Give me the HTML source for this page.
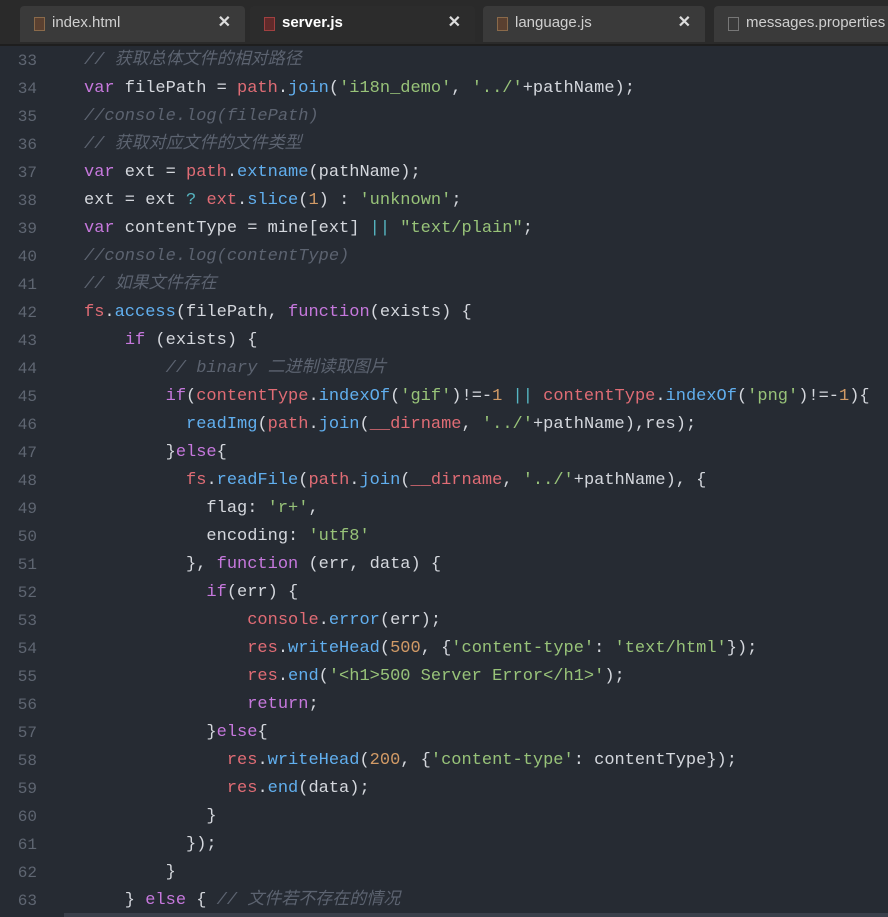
<!DOCTYPE html>
<html><head><meta charset="utf-8"><style>
body{margin:0;width:888px;height:917px;overflow:hidden;background:#262b33;font-family:"Liberation Sans",sans-serif}
.tabs{position:absolute;left:0;top:0;width:888px;height:44px;background:#2a2a2a;border-bottom:2px solid #1e1e1e}
.tab{position:absolute;top:6px;height:36px;background:#3a3a3a;color:#cfcfcf;font-size:15px;line-height:34px;border-radius:4px 4px 0 0}
.tab.act{background:#2c2c2c;color:#fff;font-weight:bold}
.tab .ic{position:absolute;left:14px;top:11px;width:9px;height:12px;border:1px solid #8a6a4a;background:#5a4030}
.tab .t{position:absolute;left:32px}
.tab .x{position:absolute;right:14px;color:#ddd;font-size:16px;font-weight:bold}
.code{position:absolute;left:0;top:47px;font-family:"Liberation Mono","Noto Sans CJK SC",monospace;font-size:17px;color:#d4d7dd}
.l{height:28px;line-height:28px;white-space:pre;position:relative}
.n{position:absolute;left:0;width:37px;text-align:right;color:#5f6672;font-size:16px}
.c{position:absolute;left:84px}
.k{color:#c678dd}.r{color:#e06c75}.b{color:#61afef}.s{color:#98c379}.o{color:#d19a66}.y{color:#56b6c2}
.m{color:#5c6370;font-style:italic}
.bot{position:absolute;left:64px;top:913px;width:824px;height:4px;background:#3a3f4a}
</style></head><body>
<div class="tabs">
<div class="tab" style="left:20px;width:225px"><span class="ic"></span><span class="t">index.html</span><span class="x">✕</span></div>
<div class="tab act" style="left:250px;width:225px"><span class="ic" style="border-color:#a04040;background:#602a2a"></span><span class="t">server.js</span><span class="x">✕</span></div>
<div class="tab" style="left:483px;width:222px"><span class="ic"></span><span class="t">language.js</span><span class="x">✕</span></div>
<div class="tab" style="left:714px;width:190px"><span class="ic" style="border-color:#777;background:#3a3a3a"></span><span class="t">messages.properties</span></div>
</div>
<div class="code">
<div class="l"><span class="n">33</span><span class="c"><span class="m">// 获取总体文件的相对路径</span></span></div>
<div class="l"><span class="n">34</span><span class="c"><span class="k">var</span> filePath = <span class="r">path</span>.<span class="b">join</span>(<span class="s">'i18n_demo'</span>, <span class="s">'../'</span>+pathName);</span></div>
<div class="l"><span class="n">35</span><span class="c"><span class="m">//console.log(filePath)</span></span></div>
<div class="l"><span class="n">36</span><span class="c"><span class="m">// 获取对应文件的文件类型</span></span></div>
<div class="l"><span class="n">37</span><span class="c"><span class="k">var</span> ext = <span class="r">path</span>.<span class="b">extname</span>(pathName);</span></div>
<div class="l"><span class="n">38</span><span class="c">ext = ext <span class="y">?</span> <span class="r">ext</span>.<span class="b">slice</span>(<span class="o">1</span>) : <span class="s">'unknown'</span>;</span></div>
<div class="l"><span class="n">39</span><span class="c"><span class="k">var</span> contentType = mine[ext] <span class="y">||</span> <span class="s">"text/plain"</span>;</span></div>
<div class="l"><span class="n">40</span><span class="c"><span class="m">//console.log(contentType)</span></span></div>
<div class="l"><span class="n">41</span><span class="c"><span class="m">// 如果文件存在</span></span></div>
<div class="l"><span class="n">42</span><span class="c"><span class="r">fs</span>.<span class="b">access</span>(filePath, <span class="k">function</span>(exists) {</span></div>
<div class="l"><span class="n">43</span><span class="c">    <span class="k">if</span> (exists) {</span></div>
<div class="l"><span class="n">44</span><span class="c">        <span class="m">// binary 二进制读取图片</span></span></div>
<div class="l"><span class="n">45</span><span class="c">        <span class="k">if</span>(<span class="r">contentType</span>.<span class="b">indexOf</span>(<span class="s">'gif'</span>)!=-<span class="o">1</span> <span class="y">||</span> <span class="r">contentType</span>.<span class="b">indexOf</span>(<span class="s">'png'</span>)!=-<span class="o">1</span>){</span></div>
<div class="l"><span class="n">46</span><span class="c">          <span class="b">readImg</span>(<span class="r">path</span>.<span class="b">join</span>(<span class="r">__dirname</span>, <span class="s">'../'</span>+pathName),res);</span></div>
<div class="l"><span class="n">47</span><span class="c">        }<span class="k">else</span>{</span></div>
<div class="l"><span class="n">48</span><span class="c">          <span class="r">fs</span>.<span class="b">readFile</span>(<span class="r">path</span>.<span class="b">join</span>(<span class="r">__dirname</span>, <span class="s">'../'</span>+pathName), {</span></div>
<div class="l"><span class="n">49</span><span class="c">            flag: <span class="s">'r+'</span>,</span></div>
<div class="l"><span class="n">50</span><span class="c">            encoding: <span class="s">'utf8'</span></span></div>
<div class="l"><span class="n">51</span><span class="c">          }, <span class="k">function</span> (err, data) {</span></div>
<div class="l"><span class="n">52</span><span class="c">            <span class="k">if</span>(err) {</span></div>
<div class="l"><span class="n">53</span><span class="c">                <span class="r">console</span>.<span class="b">error</span>(err);</span></div>
<div class="l"><span class="n">54</span><span class="c">                <span class="r">res</span>.<span class="b">writeHead</span>(<span class="o">500</span>, {<span class="s">'content-type'</span>: <span class="s">'text/html'</span>});</span></div>
<div class="l"><span class="n">55</span><span class="c">                <span class="r">res</span>.<span class="b">end</span>(<span class="s">'&lt;h1&gt;500 Server Error&lt;/h1&gt;'</span>);</span></div>
<div class="l"><span class="n">56</span><span class="c">                <span class="k">return</span>;</span></div>
<div class="l"><span class="n">57</span><span class="c">            }<span class="k">else</span>{</span></div>
<div class="l"><span class="n">58</span><span class="c">              <span class="r">res</span>.<span class="b">writeHead</span>(<span class="o">200</span>, {<span class="s">'content-type'</span>: contentType});</span></div>
<div class="l"><span class="n">59</span><span class="c">              <span class="r">res</span>.<span class="b">end</span>(data);</span></div>
<div class="l"><span class="n">60</span><span class="c">            }</span></div>
<div class="l"><span class="n">61</span><span class="c">          });</span></div>
<div class="l"><span class="n">62</span><span class="c">        }</span></div>
<div class="l"><span class="n">63</span><span class="c">    } <span class="k">else</span> { <span class="m">// 文件若不存在的情况</span></span></div>
</div>
<div class="bot"></div>
</body></html>
